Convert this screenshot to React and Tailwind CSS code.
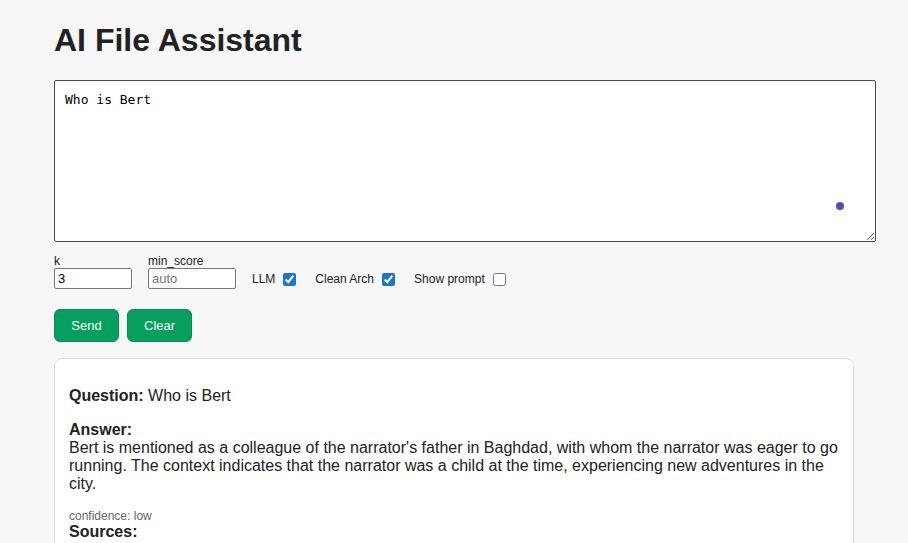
import React, { useState } from "react";

function Toggle({ label, checked, onChange }) {
  return (
    <label className="flex items-center gap-2 pr-[3px] pb-[3px]">
      {label}
      <input
        type="checkbox"
        checked={checked}
        onChange={(e) => onChange(e.target.checked)}
        className="size-[13px] accent-[#1976d2]"
      />
    </label>
  );
}

const fieldClass =
  "h-[21px] rounded-[2px] border border-[#767676] bg-white px-[3px] text-[13px] text-black placeholder:text-[#757575]";

const buttonClass =
  "h-[33px] min-w-[65px] rounded-md border border-[#0e8a57] bg-[#059f5e] px-4 text-[13px] text-white";

export default function App() {
  const [question, setQuestion] = useState("Who is Bert");
  const [k, setK] = useState("3");
  const [minScore, setMinScore] = useState("");
  const [llm, setLlm] = useState(true);
  const [cleanArch, setCleanArch] = useState(true);
  const [showPrompt, setShowPrompt] = useState(false);

  return (
    <div className="min-h-screen bg-[#f7f7f7] font-['Liberation_Sans',Arial,sans-serif] text-base leading-[18px] text-[#222]">
      <main className="mx-auto max-w-[800px] pt-[22px]">
        <h1 className="text-[32px] leading-9 font-bold">AI File Assistant</h1>

        <div className="relative mt-[22px] w-fit min-w-full">
          <textarea
            aria-label="Question"
            value={question}
            onChange={(e) => setQuestion(e.target.value)}
            className="box-content block h-[140px] w-full resize rounded-[2px] border border-[#4a4a4a] bg-white p-[10px] font-['DejaVu_Sans_Mono',monospace] text-[13px] leading-[18px] text-black"
          />
          <span className="absolute right-[10px] bottom-8 size-2 rounded-full bg-[#4353b3]" />
        </div>

        <div className="mt-3 flex flex-wrap items-end gap-4 text-xs leading-[14px]">
          <label className="flex flex-col">
            k
            <input
              type="text"
              inputMode="numeric"
              value={k}
              onChange={(e) => setK(e.target.value)}
              className={`${fieldClass} w-[78px]`}
            />
          </label>
          <label className="flex flex-col">
            min_score
            <input
              type="text"
              placeholder="auto"
              value={minScore}
              onChange={(e) => setMinScore(e.target.value)}
              className={`${fieldClass} w-[88px]`}
            />
          </label>
          <Toggle label="LLM" checked={llm} onChange={setLlm} />
          <Toggle label="Clean Arch" checked={cleanArch} onChange={setCleanArch} />
          <Toggle label="Show prompt" checked={showPrompt} onChange={setShowPrompt} />
        </div>

        <div className="mt-5 flex gap-2">
          <button type="button" className={buttonClass}>Send</button>
          <button type="button" className={buttonClass}>Clear</button>
        </div>

        <section className="mt-4 rounded-lg border border-[#ddd] bg-white px-[14px] pt-7 pb-[14px]">
          <p><strong>Question:</strong> Who is Bert</p>
          <div className="mt-4">
            <strong className="block">Answer:</strong>
            <p>
              Bert is mentioned as a colleague of the narrator's father in Baghdad, with whom the
              narrator was eager to go running. The context indicates that the narrator was a child
              at the time, experiencing new adventures in the city.
            </p>
          </div>
          <p className="mt-4 text-xs leading-[14px] text-[#666]">confidence: low</p>
          <strong className="block">Sources:</strong>
        </section>
      </main>
    </div>
  );
}
